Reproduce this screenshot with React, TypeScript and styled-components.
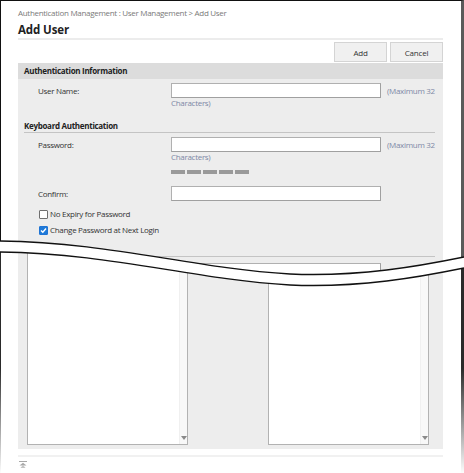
import React from 'react'
import styled, { createGlobalStyle } from 'styled-components'

const GlobalStyle = createGlobalStyle`
  html, body {
    margin: 0;
    padding: 0;
    background: #fff;
  }
  * {
    box-sizing: border-box;
  }
`

const TEAR_TOP = 'M0 241 C110 242 190 268 290 274 C360 277 420 266 464 257'
const TEAR_BOTTOM = 'M0 252 C110 253 190 279 290 285 C360 288 420 277 464 268'

const Root = styled.div`
  position: relative;
  width: 464px;
  height: 473px;
  overflow: hidden;
  background: #fff;
  font-family: 'Open Sans', 'Noto Sans', sans-serif;
  font-size: 8px;
  letter-spacing: -0.3px;
  color: #333;
`

const TopSheet = styled.div`
  display: flex;
  flex-direction: column;
  height: 290px;
  border-top: 1px solid #111;
  border-left: 1px solid #111;
  border-right: 3px solid #5a5a5a;
  padding: 0 18px 0 17px;
  background: #fff;
  clip-path: path('M0 0 H464 V257 C420 266 360 277 290 274 C190 268 110 242 0 241 Z');
`

const BottomSheet = styled.div`
  display: flex;
  flex-direction: column;
  height: 233px;
  margin-top: -50px;
  border-left: 1px solid;
  border-right: 3px solid;
  border-image: linear-gradient(to bottom, #2a2a2a 55%, rgba(255, 255, 255, 0)) 1;
  padding: 0 18px 0 17px;
  background: #fff;
  clip-path: path('M0 12 C110 13 190 39 290 45 C360 48 420 37 464 28 V233 H0 Z');
`

const Breadcrumb = styled.div`
  margin-top: 6px;
  line-height: 12px;
  color: #7a7a7a;
`

const Title = styled.h1`
  margin: 3px 0 0;
  line-height: 16px;
  font-size: 11.5px;
  letter-spacing: -0.1px;
  font-weight: 700;
  color: #222;
`

const TitleRule = styled.div`
  height: 2px;
  background: #ececec;
`

const ButtonBar = styled.div`
  display: flex;
  justify-content: flex-end;
  gap: 3px;
  margin-top: 2px;
`

const Button = styled.button`
  width: 53px;
  height: 20px;
  padding: 0;
  border: 1px solid #d4d4d4;
  background: #f0f0f0;
  font-family: inherit;
  font-size: 8px;
  letter-spacing: -0.2px;
  color: #333;
`

const SectionHeader = styled.div`
  margin-top: 1px;
  height: 16px;
  line-height: 16px;
  padding-left: 6px;
  background: #dcdcdc;
  font-weight: 700;
  color: #222;
`

const Panel = styled.div<{ $pad?: string; $height?: number }>`
  flex: ${p => (p.$height ? 'none' : '1')};
  height: ${p => (p.$height ? `${p.$height}px` : 'auto')};
  display: flex;
  flex-direction: column;
  background: #ededed;
  padding: ${p => p.$pad || '4px 0 0'};
`

const FieldRow = styled.div<{ $gap?: number }>`
  display: grid;
  grid-template-columns: 153px 210px auto;
  margin-top: ${p => p.$gap || 0}px;
`

const Label = styled.div`
  padding-left: 20px;
  line-height: 15px;
  color: #333;
`

const Input = styled.div`
  height: 15px;
  background: #fff;
  border: 1px solid #b0b0b0;
  border-bottom-color: #a0a0a0;
  border-right-color: #a0a0a0;
`

const Note = styled.div`
  padding-left: 6px;
  line-height: 15px;
  color: #7d88a6;
  white-space: nowrap;
`

const Hint = styled.div`
  grid-column: 2;
  line-height: 10px;
  color: #7d88a6;
`

const Strength = styled.div`
  grid-column: 2;
  display: flex;
  gap: 2px;
  margin-top: 8px;
`

const Bar = styled.span`
  width: 14px;
  height: 4px;
  background: #9a9a9a;
`

const SubHeading = styled.div<{ $gap?: number }>`
  margin: ${p => p.$gap || 12}px 8px 4px 6px;
  line-height: 12px;
  border-bottom: 1px solid #c4c4c4;
  font-weight: 700;
  color: #222;
  min-height: 1px;
`

const CheckRow = styled.label<{ $gap: number }>`
  display: flex;
  align-items: center;
  gap: 2px;
  margin-top: ${p => p.$gap}px;
  padding-left: 21px;
  line-height: 12px;
  color: #333;
`

const Box = styled.span<{ $checked?: boolean }>`
  display: inline-flex;
  align-items: center;
  justify-content: center;
  width: 9px;
  height: 9px;
  border: 1px solid ${p => (p.$checked ? '#1f74d4' : '#6f6f6f')};
  border-radius: 1px;
  background: ${p => (p.$checked ? '#1f7ad9' : '#fff')};
`

const ListRow = styled.div`
  display: flex;
  gap: 80px;
`

const ListBox = styled.div`
  display: flex;
  width: 161px;
  height: 197px;
  border: 1px solid #b2b2b2;
  background: #fff;
`

const ListArea = styled.div`
  flex: 1;
`

const ScrollTrack = styled.div`
  display: flex;
  flex-direction: column;
  justify-content: flex-end;
  align-items: center;
  width: 8px;
  padding-bottom: 4px;
  background: #f8f8f8;
  border-left: 1px solid #f0f0f0;
`

const Arrow = styled.span`
  width: 0;
  height: 0;
  border-left: 3px solid transparent;
  border-right: 3px solid transparent;
  border-top: 4px solid #8a8a8a;
`

const FooterRule = styled.div`
  margin-top: 6px;
  height: 2px;
  background: #f1f1f1;
`

const TopLink = styled.div`
  display: flex;
  margin: 4px 0 0 1px;
`

const Tear = styled.svg`
  position: absolute;
  top: 0;
  left: 0;
  pointer-events: none;
`

const Check = () => (
  <svg width="7" height="7" viewBox="0 0 7 7">
    <path d="M1 3.6 L2.8 5.3 L6 1.5" fill="none" stroke="#fff" strokeWidth="1.4" />
  </svg>
)

const PageTopIcon = () => (
  <svg width="8" height="7" viewBox="0 0 8 7">
    <rect x="0" y="0" width="8" height="1" fill="#a8a8a8" />
    <path d="M4 1.8 L7.5 4.5 H0.5 Z" fill="#a8a8a8" />
    <path d="M4 4 L6.5 7 H1.5 Z" fill="#c4c4c4" />
  </svg>
)

const Field = ({ label, gap, note, hint }: { label: string; gap?: number; note?: boolean; hint?: boolean }) => (
  <FieldRow $gap={gap}>
    <Label>{label}</Label>
    <Input />
    {note ? <Note>(Maximum 32</Note> : <span />}
    {hint && <Hint>Characters)</Hint>}
  </FieldRow>
)

export default function App() {
  return (
    <Root>
      <GlobalStyle />
      <TopSheet>
        <Breadcrumb>Authentication Management : User Management &gt; Add User</Breadcrumb>
        <Title>Add User</Title>
        <TitleRule />
        <ButtonBar>
          <Button>Add</Button>
          <Button>Cancel</Button>
        </ButtonBar>
        <SectionHeader>Authentication Information</SectionHeader>
        <Panel>
          <Field label="User Name:" note hint />
          <SubHeading>Keyboard Authentication</SubHeading>
          <FieldRow>
            <Label>Password:</Label>
            <Input />
            <Note>(Maximum 32</Note>
            <Hint>Characters)</Hint>
            <Strength>
              <Bar />
              <Bar />
              <Bar />
              <Bar />
              <Bar />
            </Strength>
          </FieldRow>
          <Field label="Confirm:" gap={12} />
          <CheckRow $gap={7}>
            <Box />
            No Expiry for Password
          </CheckRow>
          <CheckRow $gap={4}>
            <Box $checked>
              <Check />
            </Box>
            Change Password at Next Login
          </CheckRow>
          <SubHeading $gap={20} />
          <Field label="" gap={2} note />
        </Panel>
      </TopSheet>
      <BottomSheet>
        <Panel $pad="8px 9px 0" $height={209}>
          <ListRow>
            <ListBox>
              <ListArea />
              <ScrollTrack>
                <Arrow />
              </ScrollTrack>
            </ListBox>
            <ListBox>
              <ListArea />
              <ScrollTrack>
                <Arrow />
              </ScrollTrack>
            </ListBox>
          </ListRow>
        </Panel>
        <FooterRule />
        <TopLink>
          <PageTopIcon />
        </TopLink>
      </BottomSheet>
      <Tear width="464" height="473" viewBox="0 0 464 473">
        <path d={TEAR_TOP} fill="none" stroke="#111" strokeWidth="1.3" />
        <path d={TEAR_BOTTOM} fill="none" stroke="#111" strokeWidth="1.3" />
      </Tear>
    </Root>
  )
}
